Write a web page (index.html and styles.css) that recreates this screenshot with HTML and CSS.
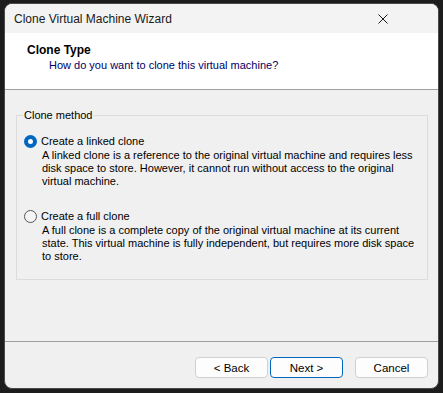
FILE: index.html
```html
<!DOCTYPE html>
<html lang="en">
<head>
    <meta charset="UTF-8">
    <title>Clone Virtual Machine Wizard</title>
    <link rel="stylesheet" href="styles.css">
</head>
<body>
    <div class="window">
        <div class="titlebar">
            <span class="title">Clone Virtual Machine Wizard</span>
            <svg class="close" width="10" height="10" viewBox="0 0 10 10">
                <path d="M0.5 0.5 L9.5 9.5 M9.5 0.5 L0.5 9.5" stroke="#1a1a1a" stroke-width="1" fill="none"/>
            </svg>
        </div>

        <div class="header">
            <div class="step-title">Clone Type</div>
            <div class="step-sub">How do you want to clone this virtual machine?</div>
        </div>

        <div class="content">
            <fieldset class="group">
                <legend>Clone method</legend>

                <div class="option">
                    <div class="option-row">
                        <span class="radio checked"></span>
                        <span class="option-label">Create a linked clone</span>
                    </div>
                    <p class="option-desc">A linked clone is a reference to the original virtual machine and requires less disk space to store. However, it cannot run without access to the original virtual machine.</p>
                </div>

                <div class="option">
                    <div class="option-row">
                        <span class="radio"></span>
                        <span class="option-label">Create a full clone</span>
                    </div>
                    <p class="option-desc">A full clone is a complete copy of the original virtual machine at its current state. This virtual machine is fully independent, but requires more disk space to store.</p>
                </div>
            </fieldset>
        </div>

        <div class="footer">
            <button class="btn">&lt; Back</button>
            <button class="btn default">Next &gt;</button>
            <button class="btn cancel">Cancel</button>
        </div>
    </div>
</body>
</html>
```

FILE: styles.css
```css
body {
    margin: 0;
    background-color: #1c1c1c;
    font-family: "Liberation Sans", Arial, sans-serif;
    font-size: 11px;
    color: #000;
}

.window {
    margin: 3px 0 0 4px;
    width: 433px;
    height: 384px;
    border: 1px solid #4a4a4a;
    border-radius: 8px;
    background-color: #f0f0f0;
    overflow: hidden;
    display: flex;
    flex-direction: column;
}

.titlebar {
    height: 29px;
    background-color: #f3f3f3;
    display: flex;
    align-items: center;
    justify-content: space-between;
    padding: 0 50px 0 9px;
}

.title {
    font-size: 12px;
    color: #1a1a1a;
}

.header {
    height: 57px;
    background-color: #fff;
    border-bottom: 1px solid #a0a0a0;
    box-sizing: border-box;
    padding: 10px 0 0 22px;
}

.step-title {
    font-size: 12px;
    font-weight: bold;
    line-height: 14px;
}

.step-sub {
    color: #000066;
    margin-left: 22px;
    line-height: 16px;
}

.content {
    flex: 1;
    padding: 18px 10px 0 11px;
    border-bottom: 1px solid #a0a0a0;
}

.group {
    margin: 0;
    height: 172px;
    box-sizing: border-box;
    border: 1px solid #dcdcdc;
    padding: 11px 5px 0 7px;
}

.group legend {
    padding: 0 1px;
    margin-left: -1px;
    line-height: 14px;
}

.option {
    margin-bottom: 20px;
}

.option-row {
    display: flex;
    align-items: center;
    gap: 4px;
    height: 16px;
    line-height: 16px;
}

.radio {
    width: 11px;
    height: 11px;
    border: 1px solid #555;
    border-radius: 50%;
    background-color: #f5f5f5;
    box-sizing: content-box;
}

.radio.checked {
    width: 5px;
    height: 5px;
    border: 4px solid #0067c0;
    background-color: #fff;
}

.option-desc {
    margin: 0 0 0 18px;
    line-height: 13px;
}

.footer {
    height: 46px;
    display: flex;
    align-items: flex-start;
    justify-content: flex-end;
    padding: 15px 10px 0 0;
    box-sizing: border-box;
    gap: 2px;
}

.btn {
    width: 73px;
    height: 21px;
    font-family: inherit;
    font-size: 11.5px;
    background-color: #fdfdfd;
    border: 1px solid #d0d0d0;
    border-radius: 4px;
    padding: 0;
    color: #000;
}

.btn.default {
    border-color: #0067c0;
}

.btn.cancel {
    margin-left: 10px;
}
```
